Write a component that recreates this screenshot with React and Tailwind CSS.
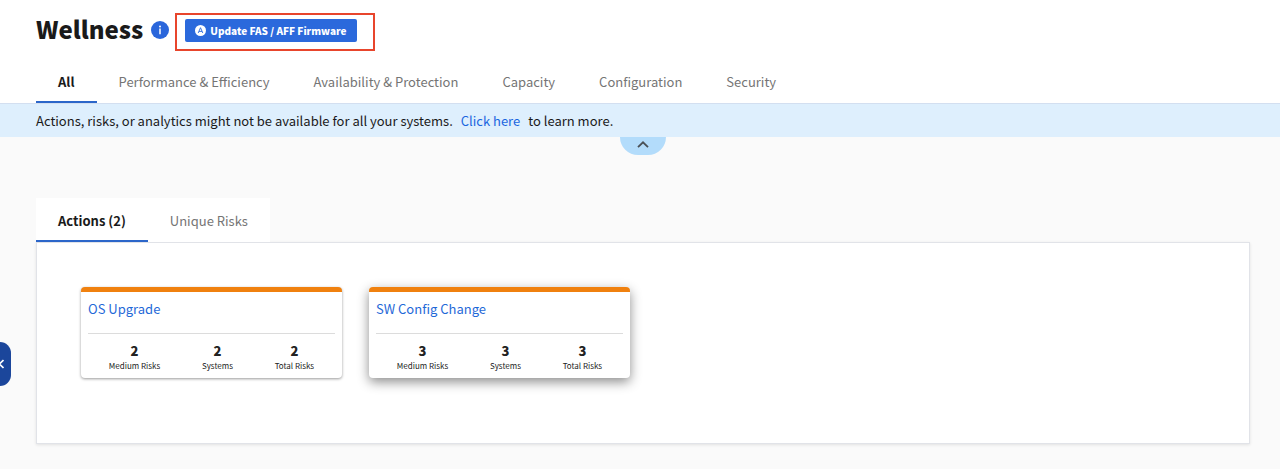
import React, { useState } from "react";

const tabs = [
  "All",
  "Performance & Efficiency",
  "Availability & Protection",
  "Capacity",
  "Configuration",
  "Security",
];

const subTabs = ["Actions (2)", "Unique Risks"];

const cards = [
  {
    title: "OS Upgrade",
    shadow: "shadow-[0_1px_3px_rgba(0,0,0,0.4)]",
    stats: [
      { value: 2, label: "Medium Risks" },
      { value: 2, label: "Systems" },
      { value: 2, label: "Total Risks" },
    ],
  },
  {
    title: "SW Config Change",
    shadow: "shadow-[0_4px_12px_rgba(0,0,0,0.45)]",
    stats: [
      { value: 3, label: "Medium Risks" },
      { value: 3, label: "Systems" },
      { value: 3, label: "Total Risks" },
    ],
  },
];

const Tab = ({ label, active, onClick, height }) => (
  <button
    type="button"
    role="tab"
    aria-selected={active}
    onClick={onClick}
    className={`${height} px-[22px] border-b-2 text-[13px] whitespace-nowrap cursor-pointer ${
      active
        ? "border-[#2c66c9] font-bold text-[#1a1a1a]"
        : "border-transparent text-[#757575]"
    }`}
  >
    {label}
  </button>
);

const ActionCard = ({ title, shadow, stats }) => (
  <div
    className={`w-[261px] rounded-[4px] border-t-[5px] border-[#f0810f] bg-white px-[7px] pb-[6px] ${shadow}`}
  >
    <div className="border-b border-[#dcdcdc] pt-[7px] pb-[14px]">
      <a href="#" className="block text-[13px] leading-5 text-[#1f69d8]">
        {title}
      </a>
    </div>
    <div className="flex justify-around pt-2">
      {stats.map((stat) => (
        <div key={stat.label} className="text-center text-[#222]">
          <div className="text-[13px] leading-[18px] font-black">
            {stat.value}
          </div>
          <div className="text-[8px] leading-3">{stat.label}</div>
        </div>
      ))}
    </div>
  </div>
);

const App = () => {
  const [tab, setTab] = useState("All");
  const [subTab, setSubTab] = useState("Actions (2)");

  return (
    <div className="relative min-h-screen bg-[#fafafa] font-['Noto_Sans_CJK_SC',sans-serif] text-[#1a1a1a]">
      <header className="border-b border-[#d3dff0] bg-white">
        <div className="flex items-start pt-[13px] pl-9">
          <h1 className="text-2xl leading-8 font-black">Wellness</h1>
          <button
            type="button"
            aria-label="Information"
            className="mt-2 ml-2 cursor-pointer"
          >
            <svg width="18" height="18" viewBox="0 0 18 18">
              <circle cx="9" cy="9" r="9" fill="#2a66db" />
              <circle cx="9" cy="5.4" r="1" fill="#fff" />
              <path d="M9 7.6v5.6" stroke="#fff" strokeWidth="1.5" />
            </svg>
          </button>
          {/* highlighted action */}
          <div className="ml-[6px] flex border-2 border-[#e8452c] pt-1 pr-4 pb-[7px] pl-2">
            <button
              type="button"
              className="flex h-[23px] items-center gap-1 rounded-[2px] bg-[#2b69dc] px-[10px] text-[10px] font-black whitespace-nowrap text-white cursor-pointer"
            >
              <svg width="11" height="11" viewBox="0 0 11 11">
                <circle cx="5.5" cy="5.5" r="5.5" fill="#fff" />
                <path
                  d="M3.2 8 5.5 2.7 7.8 8M4 6.4h3"
                  fill="none"
                  stroke="#2b69dc"
                  strokeWidth="0.9"
                />
              </svg>
              Update FAS / AFF Firmware
            </button>
          </div>
        </div>
        <div role="tablist" className="flex pt-[10px] pl-9">
          {tabs.map((name) => (
            <Tab
              key={name}
              label={name}
              height="h-[42px] pt-[2px]"
              active={tab === name}
              onClick={() => setTab(name)}
            />
          ))}
        </div>
      </header>

      <div className="bg-[#deeffd] px-9 py-[6px] text-[13px] leading-[21px]">
        Actions, risks, or analytics might not be available for all your
        systems.
        <a href="#" className="mx-2 text-[#1a66e0]">
          Click here
        </a>
        to learn more.
      </div>
      <div className="flex justify-center pl-[6px]">
        <button
          type="button"
          aria-label="Collapse"
          className="flex h-[18px] w-[46px] justify-center rounded-b-full bg-[#b3dcfb] pt-1 cursor-pointer"
        >
          <svg width="12" height="7" viewBox="0 0 12 7">
            <path
              d="M1 6.2 6 1.3l5 4.9"
              fill="none"
              stroke="#4a5056"
              strokeWidth="1.8"
            />
          </svg>
        </button>
      </div>

      <main className="pt-[43px] pr-[30px] pb-[25px] pl-9">
        <div role="tablist" className="inline-flex bg-white align-top">
          {subTabs.map((name) => (
            <Tab
              key={name}
              label={name}
              height="h-11 pt-[3px]"
              active={subTab === name}
              onClick={() => setSubTab(name)}
            />
          ))}
        </div>
        <section className="flex flex-wrap gap-[27px] border border-[#e1e3e8] bg-white px-11 pt-11 pb-[65px] shadow-[0_1px_3px_rgba(0,0,0,0.1)]">
          {cards.map((card) => (
            <ActionCard key={card.title} {...card} />
          ))}
        </section>
      </main>

      <button
        type="button"
        aria-label="Open panel"
        className="absolute top-[342px] left-0 h-11 w-[11px] rounded-r-[11px] bg-[#1b469b] cursor-pointer"
      >
        <svg width="4" height="10" viewBox="0 0 4 10">
          <path
            d="M3.5 1 -0.5 5l4 4"
            fill="none"
            stroke="#fff"
            strokeWidth="1.6"
          />
        </svg>
      </button>
    </div>
  );
};

export default App;
